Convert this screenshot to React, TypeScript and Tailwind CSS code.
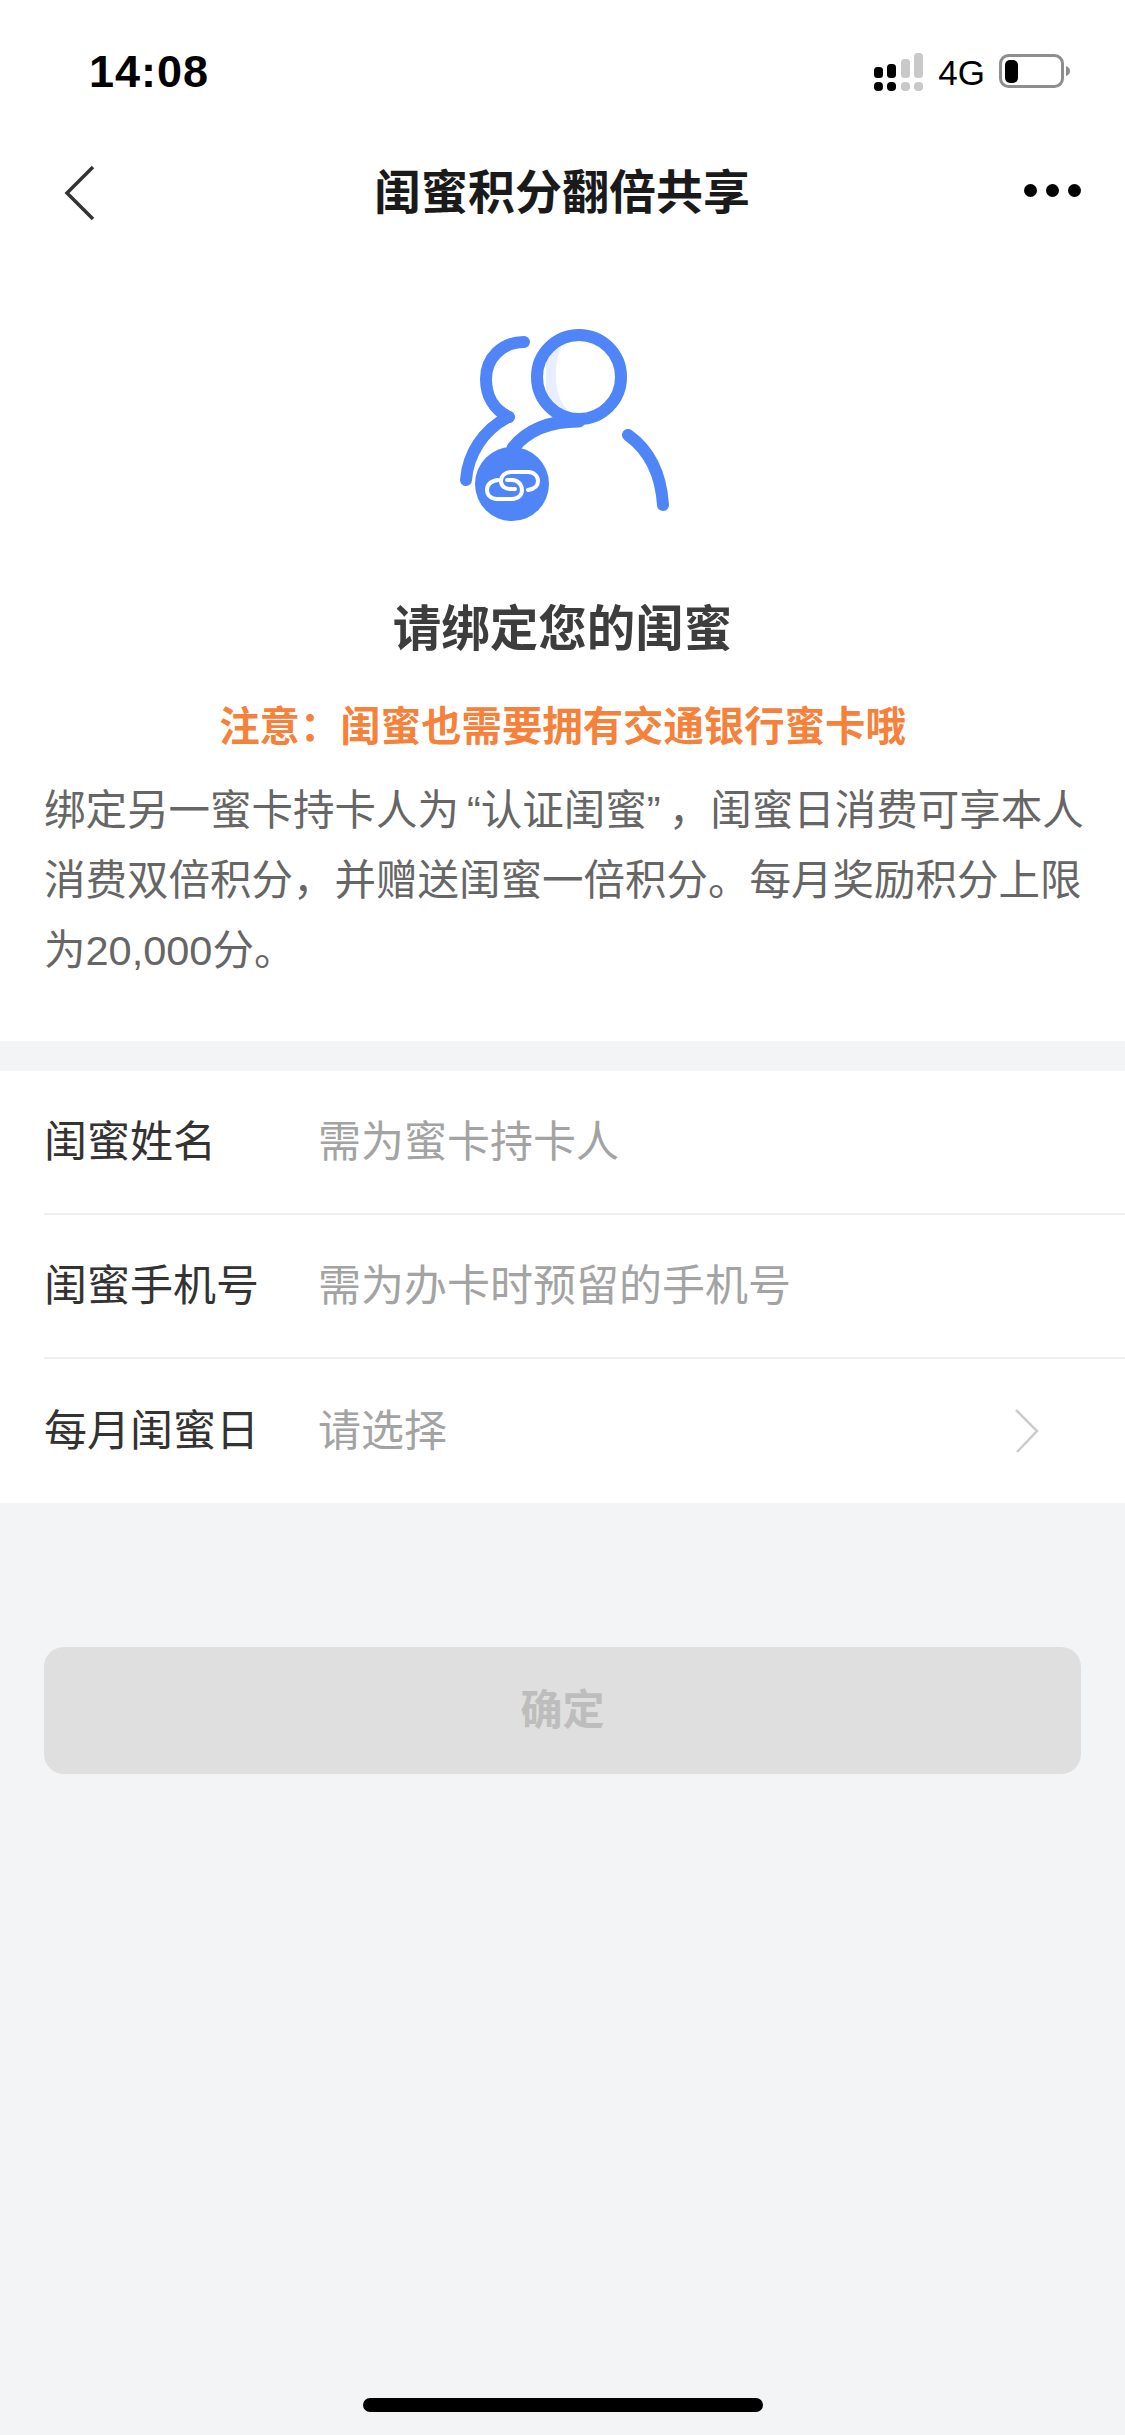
import React from "react";

const font = { fontFamily: '"Liberation Sans", "Noto Sans CJK SC", sans-serif' };

function Signal() {
  return (
    <svg width="50" height="38" viewBox="0 0 50 38" className="block">
      <rect x="0" y="14" width="9" height="11" rx="3.5" fill="#000" />
      <rect x="0" y="29" width="9" height="9" rx="4" fill="#000" />
      <rect x="13" y="11" width="9" height="14" rx="3.5" fill="#000" />
      <rect x="13" y="29" width="9" height="9" rx="4" fill="#000" />
      <rect x="27" y="6" width="9" height="19" rx="3.5" fill="#c9c9c9" />
      <rect x="27" y="29" width="9" height="9" rx="4" fill="#c9c9c9" />
      <rect x="40" y="0" width="9" height="25" rx="3.5" fill="#c9c9c9" />
      <rect x="40" y="29" width="9" height="9" rx="4" fill="#c9c9c9" />
    </svg>
  );
}

function Battery() {
  return (
    <svg width="72" height="36" viewBox="0 0 72 36" className="block">
      <rect x="1.5" y="1.5" width="62" height="31" rx="8" fill="none" stroke="#8e8e8e" strokeWidth="3" />
      <rect x="6" y="6" width="13" height="23" rx="5" fill="#000" />
      <path d="M67 12 C70 13 71 15 71 17 C71 19 70 21 67 22 Z" fill="#8e8e8e" />
    </svg>
  );
}

function Illustration() {
  const blue = "#4f85f6";
  return (
    <svg width="280" height="240" viewBox="0 0 280 240" className="block">
      <path d="M143 41 C137 52 135 62 135 77 C135 92 140 105 150 114 L125 100 L125 55 Z" fill="#e8eefd" />
      <circle cx="158" cy="77" r="42" fill="none" stroke={blue} strokeWidth="12" />
      <path d="M103 42 C81 42 65 58 65 79 C65 96 73 110 88 117" fill="none" stroke={blue} strokeWidth="12" strokeLinecap="round" />
      <path d="M87 117 C62 130 47 154 45 180" fill="none" stroke={blue} strokeWidth="12" strokeLinecap="round" />
      <path d="M92 148 C108 128 132 121 158 121" fill="none" stroke={blue} strokeWidth="13" strokeLinecap="round" />
      <path d="M207 135 C228 150 240 174 242 205" fill="none" stroke={blue} strokeWidth="12" strokeLinecap="round" />
      <circle cx="91" cy="184" r="37" fill={blue} />
      <path d="M77 180 C70 181 66 184 66 190 C66 195 70 199 76 199 L91 199 C97 199 101 195 101 190 C101 184 96 180 91 180 L86 180" fill="none" stroke="#fff" strokeWidth="4" strokeLinecap="round" />
      <path d="M107 190 C113 189 117 186 117 181 C117 176 113 172 107 172 L90 172 C84 172 80 176 80 181 C80 186 84 189 90 189 L94 189" fill="none" stroke="#fff" strokeWidth="4" strokeLinecap="round" />
    </svg>
  );
}

function Row({ label, hint, arrow, last }: { label: string; hint: string; arrow?: boolean; last?: boolean }) {
  return (
    <div className="pl-[44px]">
      <div className={`h-[144px] flex items-center ${last ? "" : "border-b-2 border-[#eeeeee]"}`}>
        <div className="w-[274px] text-[43px] text-[#333333]">{label}</div>
        <div className="flex-1 text-[43px] text-[#a3a3a3]">{hint}</div>
        {arrow && (
          <svg width="28" height="46" viewBox="0 0 28 46" className="mr-[84px] block">
            <path d="M3 2 L24 23 L4 44" fill="none" stroke="#cccccc" strokeWidth="2.5" />
          </svg>
        )}
      </div>
    </div>
  );
}

export default function App() {
  return (
    <div className="w-[1125px] h-[2435px] bg-[#f3f4f6] flex flex-col overflow-hidden" style={font}>
      <div className="bg-white h-[1041px] flex flex-col">
        <div className="h-[144px] flex items-center justify-between pl-[89px] pr-[54px]">
          <div className="text-[45px] font-bold text-black tracking-[1px]">14:08</div>
          <div className="flex items-center gap-[14px]">
            <Signal />
            <div className="text-[35px] text-black leading-none">4G</div>
            <Battery />
          </div>
        </div>
        <div className="h-[98px] flex items-center justify-between pl-[64px] pr-[44px]">
          <svg width="32" height="56" viewBox="0 0 32 56" className="block">
            <path d="M29 2 L3 28 L29 54" fill="none" stroke="#333" strokeWidth="3.5" />
          </svg>
          <div className="text-[47px] font-bold text-[#1a1a1a] ml-[4px]">闺蜜积分翻倍共享</div>
          <div className="flex gap-[9px] mb-[5px]">
            <div className="w-[13px] h-[13px] rounded-full bg-black" />
            <div className="w-[13px] h-[13px] rounded-full bg-black" />
            <div className="w-[13px] h-[13px] rounded-full bg-black" />
          </div>
        </div>
        <div className="flex justify-center mt-[58px] pr-[4px]">
          <Illustration />
        </div>
        <div className="text-center text-[48.5px] font-bold text-[#3d3d3d] mt-[55px] leading-[68px]">请绑定您的闺蜜</div>
        <div className="text-center text-[40.4px] font-bold text-[#f5813a] mt-[34px] leading-[60px]">注意：闺蜜也需要拥有交通银行蜜卡哦</div>
        <div className="pl-[44px] text-[41.5px] text-[#666666] leading-[70px] mt-[19px] whitespace-nowrap">
          绑定另一蜜卡持卡人为<span className="ml-[8px]">“</span>认证闺蜜<span className="mr-[8px]">”</span>，闺蜜日消费可享本人
          <br />
          消费双倍积分，并赠送闺蜜一倍积分。每月奖励积分上限
          <br />
          为20,000分。
        </div>
      </div>
      <div className="mt-[30px] bg-white">
        <Row label="闺蜜姓名" hint="需为蜜卡持卡人" />
        <Row label="闺蜜手机号" hint="需为办卡时预留的手机号" />
        <Row label="每月闺蜜日" hint="请选择" arrow last />
      </div>
      <div className="mt-[144px] mx-[44px] h-[127px] rounded-[20px] bg-[#dfdfdf] flex items-center justify-center text-[42px] font-bold text-[#bdbdbd]">
        确定
      </div>
      <div className="flex-1 flex items-end justify-center pb-[23px]">
        <div className="w-[400px] h-[14px] rounded-full bg-black" />
      </div>
    </div>
  );
}
